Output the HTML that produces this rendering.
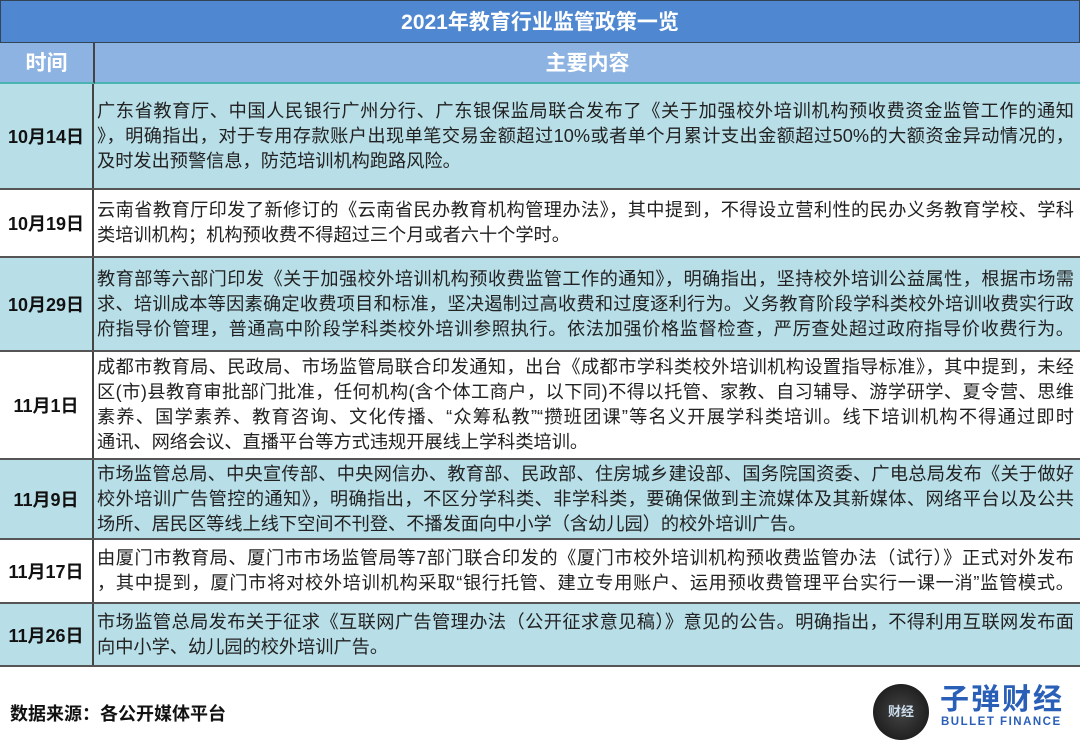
<!DOCTYPE html>
<html><head><meta charset="utf-8"><style>
*{margin:0;padding:0;box-sizing:border-box}
body{width:1080px;height:744px;overflow:hidden;background:#fff;font-family:"Liberation Sans","Noto Sans CJK SC",sans-serif;position:relative}
.title{position:absolute;left:0;top:0;width:1080px;height:43px;background:#4f88d0;color:#fff;font-weight:bold;font-size:21px;text-align:center;line-height:43px;border:1px solid #345}
.hdr{position:absolute;top:43px;height:41px;background:#8db3e2;color:#fff;font-weight:bold;font-size:21px;text-align:center;line-height:41px;border-bottom:2px solid #4bb3b0}
.row{position:absolute;left:0;width:1080px;border-bottom:2px solid #555;display:flex}
.row .d{width:94px;flex:none;border-right:2px solid #444;display:flex;align-items:center;justify-content:center;font-weight:bold;font-size:18px;color:#111}
.row .t{width:986px;padding-left:3px;display:flex;flex-direction:column;justify-content:center;font-size:18.2px;line-height:25px;color:#222}
.t div{width:977px;white-space:nowrap;overflow:hidden}
.t div.j{text-align:justify;text-align-last:justify;white-space:normal;height:25px}
.b{background:#b8dfe8}
.w{background:#fff}
</style></head><body>
<div class="title">2021年教育行业监管政策一览</div>
<div class="hdr" style="left:0;width:95px;border-right:2px solid #444">时间</div>
<div class="hdr" style="left:95px;width:985px">主要内容</div>
<div class="row b" style="top:84px;height:106px"><div class="d">10月14日</div><div class="t"><div class="j">广东省教育厅、中国人民银行广州分行、广东银保监局联合发布了《关于加强校外培训机构预收费资金监管工作的通知</div><div class="j">》，明确指出，对于专用存款账户出现单笔交易金额超过10%或者单个月累计支出金额超过50%的大额资金异动情况的，</div><div>及时发出预警信息，防范培训机构跑路风险。</div></div></div>
<div class="row w" style="top:190px;height:68px"><div class="d">10月19日</div><div class="t"><div class="j">云南省教育厅印发了新修订的《云南省民办教育机构管理办法》，其中提到，不得设立营利性的民办义务教育学校、学科</div><div>类培训机构；机构预收费不得超过三个月或者六十个学时。</div></div></div>
<div class="row b" style="top:258px;height:94px"><div class="d">10月29日</div><div class="t"><div class="j">教育部等六部门印发《关于加强校外培训机构预收费监管工作的通知》，明确指出，坚持校外培训公益属性，根据市场需</div><div class="j">求、培训成本等因素确定收费项目和标准，坚决遏制过高收费和过度逐利行为。义务教育阶段学科类校外培训收费实行政</div><div class="j">府指导价管理，普通高中阶段学科类校外培训参照执行。依法加强价格监督检查，严厉查处超过政府指导价收费行为。</div></div></div>
<div class="row w" style="top:352px;height:108px"><div class="d">11月1日</div><div class="t"><div class="j">成都市教育局、民政局、市场监管局联合印发通知，出台《成都市学科类校外培训机构设置指导标准》，其中提到，未经</div><div class="j">区(市)县教育审批部门批准，任何机构(含个体工商户，以下同)不得以托管、家教、自习辅导、游学研学、夏令营、思维</div><div class="j">素养、国学素养、教育咨询、文化传播、“众筹私教”“攒班团课”等名义开展学科类培训。线下培训机构不得通过即时</div><div>通讯、网络会议、直播平台等方式违规开展线上学科类培训。</div></div></div>
<div class="row b" style="top:460px;height:80px"><div class="d">11月9日</div><div class="t"><div class="j">市场监管总局、中央宣传部、中央网信办、教育部、民政部、住房城乡建设部、国务院国资委、广电总局发布《关于做好</div><div class="j">校外培训广告管控的通知》，明确指出，不区分学科类、非学科类，要确保做到主流媒体及其新媒体、网络平台以及公共</div><div>场所、居民区等线上线下空间不刊登、不播发面向中小学（含幼儿园）的校外培训广告。</div></div></div>
<div class="row w" style="top:540px;height:64px"><div class="d">11月17日</div><div class="t"><div class="j">由厦门市教育局、厦门市市场监管局等7部门联合印发的《厦门市校外培训机构预收费监管办法（试行）》正式对外发布</div><div class="j">，其中提到，厦门市将对校外培训机构采取“银行托管、建立专用账户、运用预收费管理平台实行一课一消”监管模式。</div></div></div>
<div class="row b" style="top:604px;height:63px"><div class="d">11月26日</div><div class="t"><div class="j">市场监管总局发布关于征求《互联网广告管理办法（公开征求意见稿）》意见的公告。明确指出，不得利用互联网发布面</div><div>向中小学、幼儿园的校外培训广告。</div></div></div>
<div style="position:absolute;left:10px;top:700px;font-size:18px;font-weight:bold;color:#111">数据来源：各公开媒体平台</div>
<div style="position:absolute;left:873px;top:684px;width:56px;height:56px;border-radius:50%;background:radial-gradient(circle,#444,#111);color:#cde;font-size:13px;font-weight:bold;text-align:center;line-height:56px">财经</div>
<div style="position:absolute;left:940px;top:684px;font-size:29px;font-weight:bold;color:#2a5fb8;letter-spacing:2px;line-height:32px">子弹财经</div>
<div style="position:absolute;left:941px;top:716px;font-size:11.5px;font-weight:bold;color:#2a5fb8;letter-spacing:1.5px">BULLET FINANCE</div>
</body></html>
